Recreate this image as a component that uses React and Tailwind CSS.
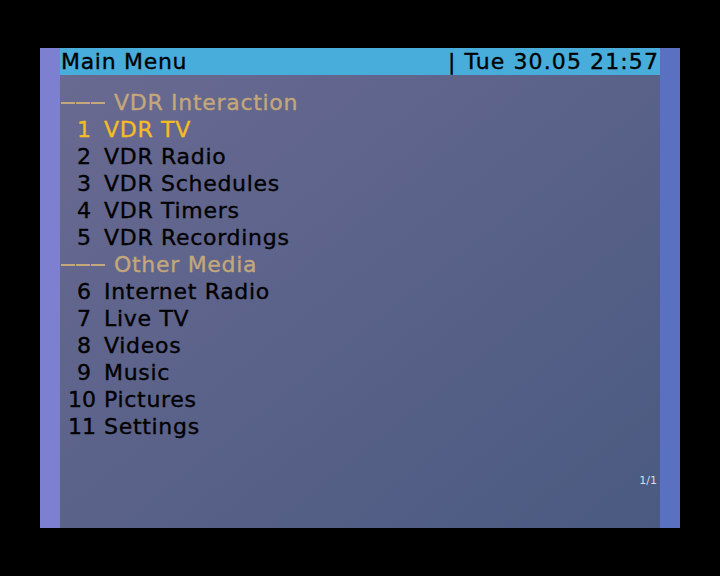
const items = [
  { type: 'section', label: 'VDR Interaction' },
  { n: 1, label: 'VDR TV', current: true },
  { n: 2, label: 'VDR Radio' },
  { n: 3, label: 'VDR Schedules' },
  { n: 4, label: 'VDR Timers' },
  { n: 5, label: 'VDR Recordings' },
  { type: 'section', label: 'Other Media' },
  { n: 6, label: 'Internet Radio' },
  { n: 7, label: 'Live TV' },
  { n: 8, label: 'Videos' },
  { n: 9, label: 'Music' },
  { n: 10, label: 'Pictures' },
  { n: 11, label: 'Settings' },
];

const font = { fontFamily: '"DejaVu Sans", "Liberation Sans", sans-serif' };

function Section({ label }) {
  return (
    <div className="flex items-center h-[27px] text-[#c4a77a]">
      <div className="flex gap-[1px] w-[53px] items-center">
        <span className="block w-[14px] h-[2px] bg-[#c4a77a]" />
        <span className="block w-[14px] h-[2px] bg-[#c4a77a]" />
        <span className="block w-[14px] h-[2px] bg-[#c4a77a]" />
      </div>
      <span>{label}</span>
    </div>
  );
}

function Row({ n, label, current }) {
  return (
    <div className={`flex items-center h-[27px] ${current ? 'text-[#f6bd22]' : 'text-black'}`}>
      <span className="w-[35px] flex justify-end tracking-[0px]">
        <span className={n < 10 ? 'mr-[5px]' : ''}>{n}</span>
      </span>
      <span className="ml-[8px]">{label}</span>
    </div>
  );
}

export default function App() {
  return (
    <div className="w-[720px] h-[576px] bg-black pt-[48px] pl-[40px]" style={font}>
      <div className="flex h-[480px] w-[640px]">
        {/* left strip */}
        <div className="w-[20px] bg-[#7d80d1]" />

        <div className="w-[600px] flex flex-col bg-gradient-to-br from-[#6a6a92] to-[#4a5a80] [-webkit-text-stroke-width:0.35px]">
          {/* title bar */}
          <div className="h-[27px] bg-[#49addc] flex items-center justify-between pl-[1px] pr-[1px] text-[22px] text-black leading-none tracking-[0.7px]">
            <span>Main Menu</span>
            <span className="tracking-[1.1px]">| Tue 30.05 21:57</span>
          </div>

          {/* menu list */}
          <div className="pt-[14px] pl-[1px] text-[22px] leading-none tracking-[0.7px] flex-1">
            {items.map((it, i) =>
              it.type === 'section' ? (
                <Section key={i} label={it.label} />
              ) : (
                <Row key={i} {...it} />
              )
            )}
          </div>

          <div className="flex justify-end pr-[3px] pb-[42px] text-[11px] text-[#d6dcea] leading-none [-webkit-text-stroke-width:0px]">
            1/1
          </div>
        </div>

        {/* right strip */}
        <div className="w-[20px] bg-[#5a70c0]" />
      </div>
    </div>
  );
}
